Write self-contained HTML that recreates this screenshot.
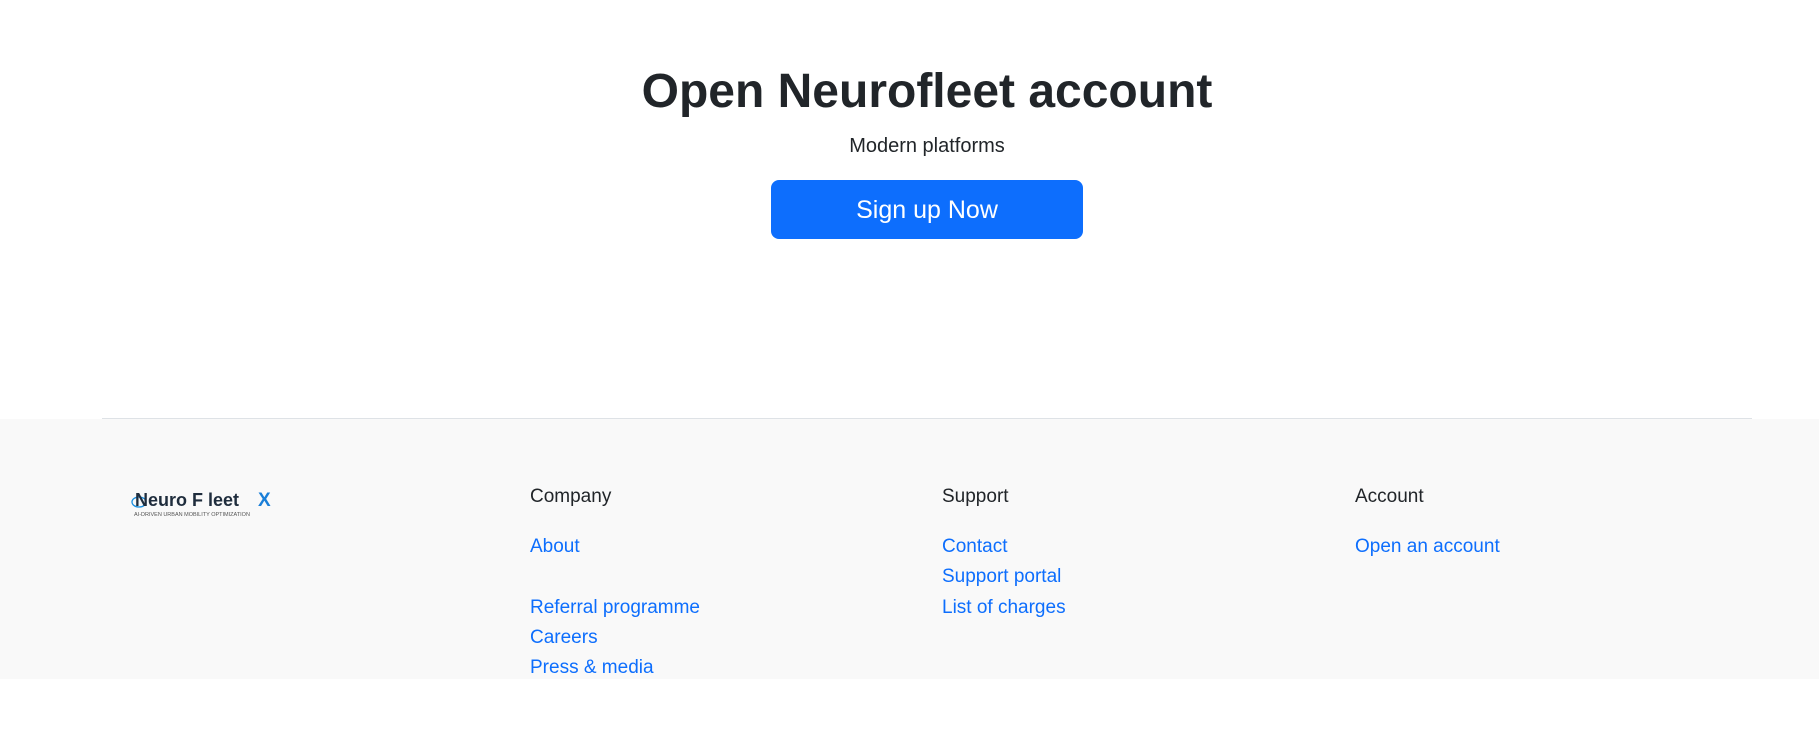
<!DOCTYPE html>
<html><head><style>
body{margin:0;width:1819px;height:737px;background:#fff;font-family:"Liberation Sans",sans-serif;color:#212529;position:relative;overflow:hidden}
.a{position:absolute;white-space:nowrap}
h1{position:absolute;left:0;width:1854px;text-align:center;top:64px;margin:0;font-size:48px;font-weight:bold}
.sub{left:0;width:1854px;text-align:center;top:135px;font-size:20px}
.btn{left:771px;top:180px;width:312px;height:59px;background:#0d6efd;border-radius:8px;color:#fff;font-size:25px;line-height:61px;text-align:center}
.foot{position:absolute;left:0;top:419px;width:1819px;height:260px;background:#f9f9f9}
.line{position:absolute;left:102px;top:418px;width:1650px;height:1px;background:#dee2e6}
.h{font-size:19px;top:486px}
.l{font-size:19px;color:#0d6efd}
</style></head><body>
<h1>Open Neurofleet account</h1>
<div class="a sub">Modern platforms</div>
<div class="a btn">Sign up Now</div>
<div class="foot"></div>
<div class="line"></div>
<svg class="a" style="left:130px;top:492px" width="20" height="20"><ellipse cx="9" cy="10" rx="7" ry="5" fill="none" stroke="#1a8fe0" stroke-width="1.3"/></svg>
<div class="a" style="left:135px;top:490px;font-size:18px;font-weight:bold;color:#1f2d3d">Neuro F leet</div>
<div class="a" style="left:258px;top:490px;font-size:19px;font-weight:bold;color:#1a7fd8">X</div>
<div class="a" style="left:134px;top:512px;font-size:5.5px;color:#555">AI-DRIVEN URBAN MOBILITY OPTIMIZATION</div>
<div class="a h" style="left:530px">Company</div>
<div class="a h" style="left:942px">Support</div>
<div class="a h" style="left:1355px">Account</div>
<div class="a l" style="left:530px;top:536px">About</div>
<div class="a l" style="left:530px;top:597px">Referral programme</div>
<div class="a l" style="left:530px;top:627px">Careers</div>
<div class="a l" style="left:530px;top:657px">Press &amp; media</div>
<div class="a l" style="left:942px;top:536px">Contact</div>
<div class="a l" style="left:942px;top:566px">Support portal</div>
<div class="a l" style="left:942px;top:597px">List of charges</div>
<div class="a l" style="left:1355px;top:536px">Open an account</div>
</body></html>
